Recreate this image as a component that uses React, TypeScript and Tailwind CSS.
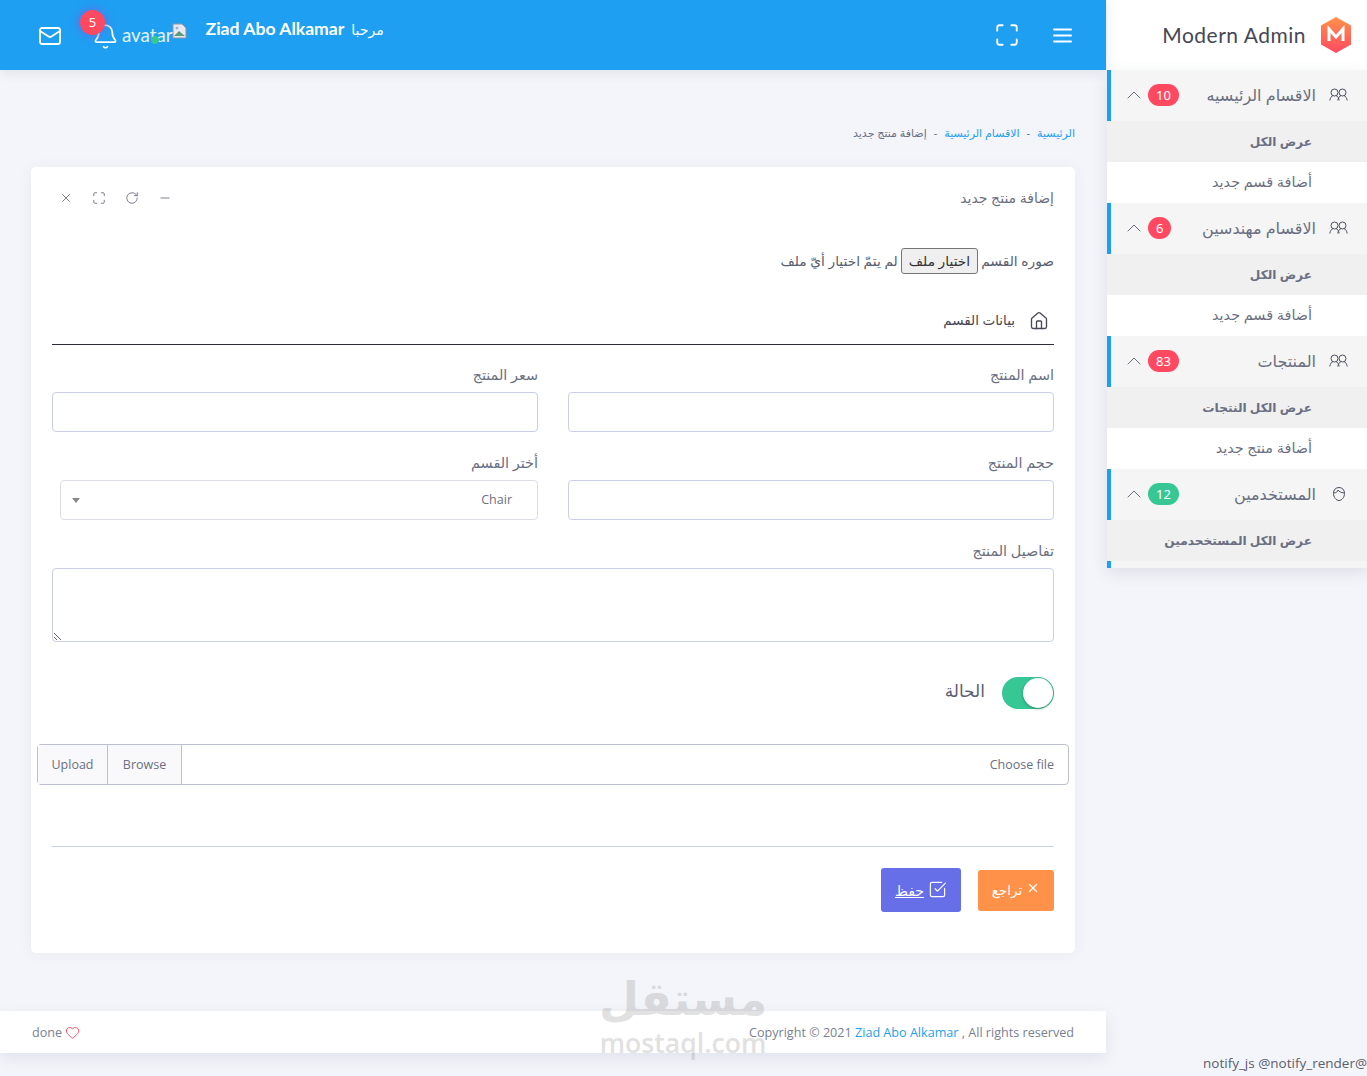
import { Bell, CheckSquare, ChevronUp, Heart, Home, Mail, Maximize, Minus, RotateCw, X } from "lucide-react";

const arabic = "font-['Noto_Sans','DejaVu_Sans',sans-serif]";

interface NavGroup {
  title: string;
  count: string;
  green?: boolean;
  face?: boolean;
  links: string[];
}

const navGroups: NavGroup[] = [
  { title: "الاقسام الرئيسيه", count: "10", links: ["عرض الكل", "أضافة قسم جديد"] },
  { title: "الاقسام مهندسين", count: "6", links: ["عرض الكل", "أضافة قسم جديد"] },
  { title: "المنتجات", count: "83", links: ["عرض الكل النتجات", "أضافة منتج جديد"] },
  { title: "المستخدمين", count: "12", green: true, face: true, links: ["عرض الكل المستخحدمين"] },
];

function FaceIcon() {
  return (
    <svg width="14" height="16" viewBox="0 0 14 16" fill="none" stroke="#4b4f60" strokeWidth="1">
      <path d="M7 1.500c3.200 0 5.500 2.300 5.500 5.800 0 4-2.600 7.200-5.500 7.200s-5.500-3.200-5.500-7.200C1.500 3.800 3.800 1.500 7 1.500z" />
      <path d="M2 7c2.500-.3 3.500-1.300 4-3 1 1.500 3 2.700 6 3" />
    </svg>
  );
}

function PairIcon() {
  return (
    <svg width="19" height="14" viewBox="0 0 19 14" fill="none" stroke="#4b4f60" strokeWidth="1">
      <circle cx="5.500" cy="4.500" r="3.500" />
      <circle cx="13.500" cy="4.500" r="3.500" />
      <path d="M.8 12.500c.4-2.600 1.700-4.400 3.200-5M10.200 12.500c-.4-2.600-1.700-4.400-3.200-5M8.800 12.500c.4-2.600 1.700-4.400 3.200-5M18.200 12.500c-.4-2.600-1.700-4.400-3.200-5" />
    </svg>
  );
}

function Sidebar() {
  return (
    <aside className="w-[261px] shrink-0 pl-px">
      <div className="flex h-[70px] items-center justify-end gap-[13px] bg-white pr-[14px]">
        <span className="font-['Lato',sans-serif] text-[21px] tracking-[0.5px] text-[#464855]">Modern Admin</span>
        <svg width="34" height="38" viewBox="0 0 34 38">
          <defs>
            <linearGradient id="logo" x1="0" y1="0" x2="0" y2="1">
              <stop offset="0" stopColor="#ff9149" />
              <stop offset="1" stopColor="#ff4961" />
            </linearGradient>
          </defs>
          <path d="M17 1l15 8.500v19L17 37 2 28.500v-19z" fill="url(#logo)" />
          <path d="M10 25V13l7 8 7-8v12" fill="none" stroke="#fff" strokeWidth="3" />
        </svg>
      </div>
      <nav className="bg-[#f5f5f5] shadow-[0_5px_15px_rgba(60,70,110,0.12)]" dir="rtl">
        {navGroups.map((group) => (
          <div key={group.title} className={arabic}>
            <div className="flex h-[51px] items-center border-l-4 border-[#1e9ff2] bg-[#f5f5f5] pr-[19px] pl-[11px] text-[#6b6f82]">
              <span className="-mt-[2px] flex w-[19px] justify-center">{group.face ? <FaceIcon /> : <PairIcon />}</span>
              <span className="mr-[13px] -mt-[2px] text-[16px]">{group.title}</span>
              <span
                className={`mr-auto -mt-[2px] min-w-[23px] rounded-full px-[8px] text-center text-[13px] leading-[22px] text-white ${
                  group.green ? "bg-[#36c795]" : "bg-[#ff4961]"
                }`}
              >
                {group.count}
              </span>
              <ChevronUp size={24} strokeWidth={1} className="mr-[2px] -mt-[2px] text-[#6b6f82]" />
            </div>
            {group.links.map((link, i) => (
              <div
                key={link}
                className={`flex h-[41px] items-center pr-[55px] text-[#6b6f82] ${
                  i === 0 ? "bg-[#f0f0f0] pt-[2px] text-[12.200px] font-bold" : "bg-white pb-[2px] text-[14.400px]"
                }`}
              >
                {link}
              </div>
            ))}
          </div>
        ))}
        <div className="h-[7px] border-l-4 border-[#1e9ff2]" />
      </nav>
    </aside>
  );
}

function Header() {
  return (
    <header className="relative flex h-[70px] items-center justify-between bg-[#1e9ff2] pr-[34px] pl-[38px] shadow-[0_2px_12px_rgba(60,70,110,0.12)]">
      <div className="mt-[22px] flex items-start self-start text-white">
        <Mail size={24} strokeWidth={1.800} className="mt-[2px]" />
        <div className="relative mt-[1px] ml-[30px]">
          <Bell size={27} strokeWidth={1.500} />
          <span className="absolute -top-[13px] -left-[12px] flex h-[25px] w-[25px] items-center justify-center rounded-full bg-[#ff4961] text-[13px] shadow-[0_0_6px_3px_rgba(102,110,232,0.6)]">
            5
          </span>
        </div>
        <div className="relative -mr-[1px] ml-[3px] font-['Lato',sans-serif] text-[18.700px] leading-[26px] text-[#e3f3fd]">
          avatar
          <span className="absolute top-[14px] left-[29px] h-[8px] w-[8px] rounded-full bg-[#36c795]" />
        </div>
        <svg width="16" height="16" viewBox="0 0 16 16" className="mt-[1px]">
          <path d="M1 1h9l4 4v10H1z" fill="#e7e9f0" stroke="#8d93a8" />
          <path d="M2 13l5-5 6 5z" fill="#5f9a78" />
          <circle cx="5" cy="5" r="1.500" fill="#9fb4d8" />
        </svg>
        <div className="-mt-[6px] ml-[18px] flex items-center gap-[7px]">
          <span className="font-['Lato',sans-serif] text-[17.600px] leading-[26px] font-bold">Ziad Abo Alkamar</span>
          <span className={`${arabic} text-[14px]`}>مرحبا</span>
        </div>
      </div>
      <div className="flex items-center gap-[33px] text-white">
        <Maximize size={26} strokeWidth={1.700} />
        <svg width="19" height="15" viewBox="0 0 19 15" stroke="currentColor" strokeWidth="2" strokeLinecap="round">
          <path d="M1 1.500h17M1 7.500h17M1 13.500h17" />
        </svg>
      </div>
    </header>
  );
}

function Field({ label, children }: { label: string; children?: React.ReactNode }) {
  return (
    <div>
      <label className="mb-[6px] block h-[22px] text-[14.400px] leading-[22px] text-[#6b6f82]">{label}</label>
      {children ?? <input className="block h-[40px] w-full rounded-[4px] border border-[#cacfe7] bg-white" />}
    </div>
  );
}

function ProductCard() {
  return (
    <section className={`${arabic} mt-[24px] mr-[31px] ml-[31px] h-[786px] rounded-[5px] bg-white px-[21px] text-[#6b6f82] shadow-[0_1px_15px_rgba(60,70,110,0.06)]`} dir="rtl">
      <div className="flex h-[61px] items-center justify-between">
        <h4 className="text-[14px]">إضافة منتج جديد</h4>
        <div className="ml-[7px] flex items-center gap-[19px] text-[#6b6f82]">
          <Minus size={14} strokeWidth={1.500} />
          <RotateCw size={14} strokeWidth={1.500} />
          <Maximize size={14} strokeWidth={1.500} />
          <X size={14} strokeWidth={1.500} />
        </div>
      </div>
      <div className="mt-[20px] flex h-[26px] items-center gap-[3px] text-[13.800px] text-[#5a5e70]">
        <span>صوره القسم</span>
        <button className="h-[26px] rounded-[3px] border border-[#767676] bg-[#efefef] px-[7px] text-[13.800px] text-[#333]">اختيار ملف</button>
        <span>لم يتمّ اختيار أيّ ملف</span>
      </div>
      <div className="mt-[33px] flex h-[38px] items-start gap-[14px] border-b border-[#2b2e3a] text-[13.500px] text-[#464855]">
        <Home size={20} strokeWidth={1.600} className="mt-[4px] mr-[5px]" />
        <span className="mt-[3px]">بيانات القسم</span>
      </div>
      <div className="mt-[19px] grid grid-cols-2 gap-x-[30px] gap-y-[20px]">
        <Field label="اسم المنتج" />
        <Field label="سعر المنتج" />
        <Field label="حجم المنتج" />
        <Field label="أختر القسم">
          <div className="flex h-[40px] w-[478px] items-center justify-between rounded-[4px] border border-[#dadde6] pt-[1px] pr-[25px] pl-[11px] font-['Open_Sans',sans-serif] text-[12.500px]">
            <span>Chair</span>
            <span className="h-0 w-0 border-x-[4px] border-t-[5px] border-x-transparent border-t-[#888]" />
          </div>
        </Field>
        <div className="col-span-2">
          <Field label="تفاصيل المنتج">
            <textarea className="block h-[74px] w-full rounded-[4px] border border-[#cacfe7] bg-white" />
          </Field>
        </div>
      </div>
      <div className="mt-[35px] flex items-center gap-[17px]">
        <div className="flex h-[32px] w-[52px] justify-start rounded-full bg-[#36c795] p-px">
          <span className="h-[30px] w-[30px] rounded-full bg-white shadow-[0_1px_3px_rgba(0,0,0,0.3)]" />
        </div>
        <span className="-mt-[5px] text-[17px] text-[#5a5e70]">الحالة</span>
      </div>
      <div className="-mx-[15px] mt-[35px] flex h-[41px] items-center rounded-[4px] border border-[#bcc0cf] font-['Open_Sans',sans-serif] text-[12.500px]" dir="ltr">
        <span className="flex h-full w-[70px] items-center justify-center border-r border-[#bcc0cf] bg-[#f9f9fb] pt-[2px]">Upload</span>
        <span className="flex h-full w-[74px] items-center justify-center border-r border-[#bcc0cf] bg-[#f9f9fb] pt-[2px]">Browse</span>
        <span className="ml-auto pt-[2px] pr-[14px]">Choose file</span>
      </div>
      <div className="mt-[61px] border-t border-[#cacfe7]" />
      <div className="mt-[21px] flex items-center gap-[17px]">
        <button className="flex h-[41px] w-[76px] items-center justify-center gap-[4px] rounded-[3px] bg-[#ff9149] text-[13.500px] text-white">
          <X size={14} strokeWidth={2.200} className="-mt-[4px]" />
          تراجع
        </button>
        <button className="flex h-[44px] w-[80px] items-center justify-center gap-[4px] rounded-[3px] bg-[#666ee8] text-[14px] text-white">
          <CheckSquare size={19} strokeWidth={1.500} className="-mt-[2px]" />
          <span className="underline">حفظ</span>
        </button>
      </div>
    </section>
  );
}

function Footer() {
  return (
    <footer className="mt-[58px] flex h-[42px] items-center justify-between bg-white pt-[2px] pr-[32px] pl-[32px] font-['Open_Sans',sans-serif] text-[12.600px] text-[#7b7f93] shadow-[0_5px_15px_rgba(60,70,110,0.1)]">
      <span className="flex items-center gap-[3px]">
        done <Heart size={15} strokeWidth={1.300} className="text-[#ff2f4b]" />
      </span>
      <span>
        Copyright © 2021 <span className="text-[#1e9ff2]">Ziad Abo Alkamar</span> , All rights reserved
      </span>
    </footer>
  );
}

export default function App() {
  return (
    <div className="relative flex h-[1076px] w-[1367px] overflow-hidden bg-[#f4f5fa]">
      <main className="w-[1106px] shrink-0">
        <Header />
        <div className={`${arabic} mt-[53px] flex h-[20px] items-center gap-[7px] pr-[31px] text-[11px] leading-[20px] text-[#6b6f82]`} dir="rtl">
          <span className="text-[#1e9ff2]">الرئيسية</span>
          <span>-</span>
          <span className="text-[#1e9ff2]">الاقسام الرئيسية</span>
          <span>-</span>
          <span>إضافة منتج جديد</span>
        </div>
        <ProductCard />
        <Footer />
      </main>
      <Sidebar />
      <div className="pointer-events-none absolute top-[966px] left-[600px] flex w-[166px] flex-col items-center text-[#8a8a8a] opacity-25">
        <span className={`${arabic} text-[46px] leading-[62px] font-bold`}>مستقل</span>
        <span className="font-['Open_Sans',sans-serif] text-[26.600px] leading-[30px] font-semibold">mostaql.com</span>
      </div>
      <span className="absolute right-0 bottom-[3px] font-['Open_Sans',sans-serif] text-[13.500px] text-[#5a5e70]">notify_js @notify_render@</span>
    </div>
  );
}
